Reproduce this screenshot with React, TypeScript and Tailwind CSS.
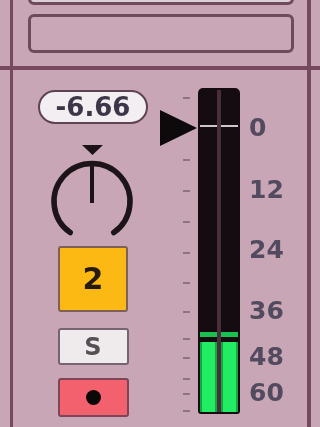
import React from "react";

const ticks = [27, 89, 120, 151, 182, 212, 241, 268, 287, 308, 323, 340];
const labels: { t: string; c: number }[] = [
  { t: "0", c: 58 },
  { t: "12", c: 120 },
  { t: "24", c: 180 },
  { t: "36", c: 241 },
  { t: "48", c: 287 },
  { t: "60", c: 323 },
];

function Channel() {
  return (
    <div className="flex-1 flex flex-col bg-[#140c10]">
      <div className="mt-[35px] h-[2px] bg-[#cfc6ca]" />
      <div className="flex-1" />
      <div className="h-[5px] bg-[#19c24f]" />
      <div className="mt-[5px] h-[70px] bg-[#22ec62] border-x-2 border-[#12a844]" />
    </div>
  );
}

export default function App() {
  const font = { fontFamily: '"DejaVu Sans", Verdana, sans-serif' };
  return (
    <div className="w-[320px] h-[427px] overflow-hidden bg-[#c9a6b5] flex flex-col blur-[0.6px]" style={font}>
      {/* top row */}
      <div className="h-[66px] flex flex-row shrink-0">
        <div className="w-[10px]" />
        <div className="w-[3px] bg-[#77495e]" />
        <div className="flex-1 flex flex-col">
          <div className="mt-[-19px] ml-[15px] mr-[13px] h-[24px] rounded-[6px] border-[3px] border-[#6d4b5b] bg-[#dccfd5]" />
          <div className="mt-[9px] ml-[15px] mr-[13px] h-[39px] rounded-[6px] border-[3px] border-[#6d4b5b] bg-[#caa7b6]" />
        </div>
        <div className="w-[4px] bg-[#77495e]" />
        <div className="w-[9px]" />
      </div>
      {/* divider */}
      <div className="h-[4px] bg-[#77495e] shrink-0" />
      {/* bottom row */}
      <div className="flex-1 flex flex-row">
        <div className="w-[10px]" />
        <div className="w-[3px] bg-[#77495e]" />
        <div className="flex-1 flex flex-row">
          {/* left controls */}
          <div className="ml-[25px] w-[110px] flex flex-col items-center pt-[20px]">
            <div className="w-[110px] h-[34px] rounded-full border-2 border-[#5e4452] bg-[#f3eef1] flex items-center justify-center">
              <span className="text-[26px] font-bold leading-none text-[#3d3648]">-6.66</span>
            </div>
            <svg width="110" height="100" viewBox="0 0 110 100" className="mt-[16px]">
              <polygon points="44,5 65,5 54.5,15" fill="#1a1216" />
              <path
                d="M 32.2 92.6 A 38 38 0 1 1 75.8 92.6"
                fill="none"
                stroke="#1c1418"
                strokeWidth="5.5"
                strokeLinecap="round"
              />
              <line x1="54" y1="22" x2="54" y2="63" stroke="#1c1418" strokeWidth="4" />
            </svg>
            <div className="mt-[6px] w-[70px] h-[66px] rounded-[3px] border-2 border-[#7e6058] bg-[#fcb813] flex items-center justify-center">
              <span className="text-[30px] font-bold leading-none text-[#241a10]">2</span>
            </div>
            <div className="mt-[16px] w-[71px] h-[37px] rounded-[3px] border-2 border-[#766470] bg-[#efebed] flex items-center justify-center">
              <span className="text-[24px] font-bold leading-none text-[#555055]">S</span>
            </div>
            <div className="mt-[13px] w-[71px] h-[39px] rounded-[3px] border-2 border-[#7c4656] bg-[#f2616d] flex items-center justify-center">
              <div className="w-[15px] h-[15px] rounded-full bg-[#0c0808]" />
            </div>
          </div>
          {/* meter group */}
          <div className="ml-[12px] flex flex-row">
            <div className="relative w-[38px]">
              {ticks.map((t) => (
                <div key={t} className="absolute left-[23px] w-[7px] h-[2px] bg-[#8c7482]" style={{ top: t }} />
              ))}
              <svg className="absolute left-0 top-[40px]" width="38" height="37" viewBox="0 0 38 37">
                <polygon points="0,0 37,18 0,36" fill="#0e0a0c" />
              </svg>
            </div>
            <div className="mt-[18px] w-[42px] h-[326px] rounded-t-[5px] rounded-b-[3px] bg-[#140c10] p-[2px] flex flex-row">
              <Channel />
              <div className="w-[4px] bg-[#4a2f3b]" />
              <Channel />
            </div>
            <div className="relative ml-[9px] w-[50px]">
              {labels.map((l) => (
                <span
                  key={l.t}
                  className="absolute left-0 text-[25px] font-bold leading-[30px] text-[#524a5e]"
                  style={{ top: l.c - 15 }}
                >
                  {l.t}
                </span>
              ))}
            </div>
          </div>
        </div>
        <div className="w-[4px] bg-[#77495e]" />
        <div className="w-[9px]" />
      </div>
    </div>
  );
}
